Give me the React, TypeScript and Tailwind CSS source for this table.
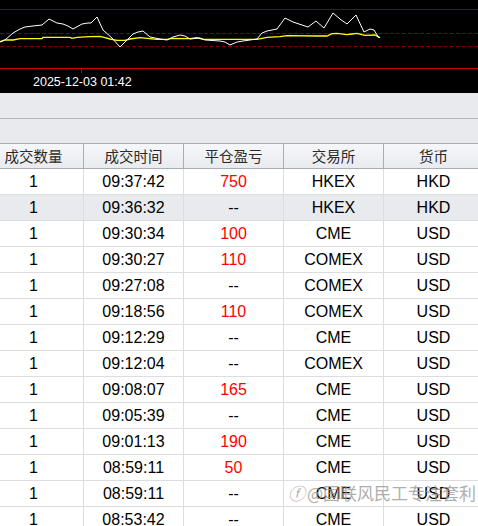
const rows: [string, string, string, string][] = [
  ["09:37:42", "750", "HKEX", "HKD"],
  ["09:36:32", "--", "HKEX", "HKD"],
  ["09:30:34", "100", "CME", "USD"],
  ["09:30:27", "110", "COMEX", "USD"],
  ["09:27:08", "--", "COMEX", "USD"],
  ["09:18:56", "110", "COMEX", "USD"],
  ["09:12:29", "--", "CME", "USD"],
  ["09:12:04", "--", "COMEX", "USD"],
  ["09:08:07", "165", "CME", "USD"],
  ["09:05:39", "--", "CME", "USD"],
  ["09:01:13", "190", "CME", "USD"],
  ["08:59:11", "50", "CME", "USD"],
  ["08:59:11", "--", "CME", "USD"],
  ["08:53:42", "--", "CME", "USD"],
];

const headers = ["成交数量", "成交时间", "平仓盈亏", "交易所", "货币"];

const price =
  "0,42 5,40 13,33 20,29 25,27 33,26 42,25 49,19 57,23 63,24 68,26 73,29 82,24 88,23 91,23 97,17 103,30 112,38 120,47 127,40 133,34 138,32 143,31 150,37 160,39 167,40 173,37 180,35 185,36 190,39 200,38 205,40 220,41 225,42 230,45 237,42 243,41 257,39 262,33 267,31 277,29 285,18 293,22 308,27 316,21 324,28 333,13 340,19 347,24 356,15 364,32 370,29 374,30 379,38";
const avg =
  "0,41.7 5,40 13,40 20,38.7 42,38.7 43,37.3 70,37.3 72,38.3 77,37.3 90,36.7 100,36.3 105,37.7 110,39 117,40.3 125,40.3 130,39 140,37.7 147,38.3 157,39.3 167,39.3 172,38.3 190,38.7 197,37.7 203,39.3 257,39.3 267,37.3 280,36.7 287,35.7 317,36 327,36 332,33.7 337,33.3 347,34.7 352,34 357,33.3 362,34.7 365,35.3 375,35 378,36.7 380,37.7";

function Chart() {
  return (
    <div className="flex h-[93px] flex-col bg-black">
      <svg width="478" height="73" className="block">
        <line x1="0" y1="9.5" x2="478" y2="9.5" stroke="#7a0000" strokeWidth="1" />
        <line x1="0" y1="33.5" x2="478" y2="33.5" stroke="#7a0000" strokeWidth="1" strokeDasharray="4 2" />
        <line x1="0" y1="46.5" x2="478" y2="46.5" stroke="#7a0000" strokeWidth="1" strokeDasharray="4 2" />
        <polyline points={avg} fill="none" stroke="#ffff00" strokeWidth="1.3" />
        <polyline points={price} fill="none" stroke="#ffffff" strokeWidth="1" />
        <line x1="0" y1="68.5" x2="478" y2="68.5" stroke="#d00000" strokeWidth="1" />
        <line x1="81.5" y1="68" x2="81.5" y2="73" stroke="#d00000" strokeWidth="1" />
      </svg>
      <div className="pl-[33px] font-['Liberation_Sans',sans-serif] text-[12.5px] leading-[18px] text-white">
        2025-12-03 01:42
      </div>
    </div>
  );
}

export default function App() {
  return (
    <div className="relative h-[526px] w-[478px] overflow-hidden bg-white font-['Liberation_Sans','Noto_Sans_CJK_SC',sans-serif]">
      <Chart />
      <div className="h-[26px] border-b border-[#b4b7be] bg-[#e8eaee]" />
      <div className="h-[25px] border-b border-[#a9adb4] bg-[#e8eaee]" />
      <div className="ml-[-16px] flex h-[25px] border-b border-[#a9adb4] bg-gradient-to-b from-[#f6f7f9] to-[#e9ebef]">
        {headers.map((h) => (
          <div
            key={h}
            className="flex w-[100px] shrink-0 items-center justify-center border-r border-[#a9adb4] font-['Noto_Sans_CJK_SC',sans-serif] text-[14.5px] text-[#2a2a2a]"
          >
            {h}
          </div>
        ))}
      </div>
      {rows.map((r, i) => (
        <div
          key={i}
          className={`ml-[-16px] flex h-[26px] border-b border-[#dcdde1] text-[16px] text-black ${
            i === 1 ? "bg-[#e9eaed]" : "bg-white"
          }`}
        >
          <div className="flex w-[100px] shrink-0 items-center justify-center border-r border-[#dcdde1]">1</div>
          <div className="flex w-[100px] shrink-0 items-center justify-center border-r border-[#dcdde1]">{r[0]}</div>
          <div
            className={`flex w-[100px] shrink-0 items-center justify-center border-r border-[#dcdde1] ${
              r[1] === "--" ? "text-black" : "text-[#ff0000]"
            }`}
          >
            {r[1]}
          </div>
          <div className="flex w-[100px] shrink-0 items-center justify-center border-r border-[#dcdde1]">{r[2]}</div>
          <div className="flex w-[100px] shrink-0 items-center justify-center border-r border-[#dcdde1]">{r[3]}</div>
        </div>
      ))}
      <div className="absolute left-[288px] top-[480px] flex items-center gap-[2px] font-['Noto_Sans_CJK_SC',sans-serif] text-[17px] text-[#9a9a9a] opacity-80">
        <span className="italic">ⓕ</span>
        <span>@国联风民工专注套利</span>
      </div>
    </div>
  );
}
